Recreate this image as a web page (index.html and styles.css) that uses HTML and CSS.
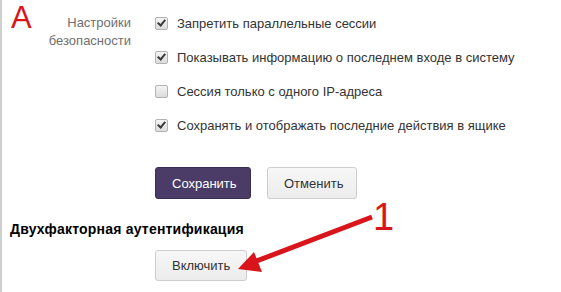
FILE: index.html
```html
<!DOCTYPE html>
<html lang="ru">
  <head>
    <meta charset="UTF-8" />
    <meta name="viewport" content="width=device-width, initial-scale=1.0" />
    <title>Настройки безопасности</title>
    <link rel="stylesheet" href="styles.css">
  </head>
  <body>
    <div class="page">
      <span class="mark mark-a">A</span>

      <div class="section">
        <div class="section-label">Настройки<br />безопасности</div>
        <div class="options">
          <div class="option"><span class="check on"></span>Запретить параллельные сессии</div>
          <div class="option"><span class="check on"></span>Показывать информацию о последнем входе в систему</div>
          <div class="option"><span class="check"></span>Сессия только с одного IP-адреса</div>
          <div class="option"><span class="check on"></span>Сохранять и отображать последние действия в ящике</div>

          <div class="actions">
            <button class="btn btn-primary">Сохранить</button>
            <button class="btn btn-cancel">Отменить</button>
          </div>
        </div>
      </div>

      <h2 class="title">Двухфакторная аутентификация</h2>
      <div class="enable">
        <button class="btn btn-enable">Включить</button>
      </div>

      <!-- annotation arrow -->
      <svg class="arrow" width="561" height="292" viewBox="0 0 561 292">
        <line x1="372" y1="217" x2="254" y2="262" stroke="#d9151b" stroke-width="5" />
        <polygon points="238,269 254,252 262,272" fill="#d9151b" />
      </svg>
      <span class="mark mark-1">1</span>
    </div>
  </body>
</html>
```

FILE: styles.css
```css
body {
  margin: 0;
  font-family: "Liberation Sans", Arial, sans-serif;
  font-size: 13px;
  color: #333;
  background: #fff;
}

.page {
  position: relative;
  height: 292px;
  border-left: 2px solid #cfcfcf;
  overflow: hidden;
}

.mark {
  position: absolute;
  color: #d9151b;
  font-family: "Liberation Sans", Arial, sans-serif;
  line-height: 1;
}

.mark-a {
  left: 9px;
  top: 2px;
  font-size: 31px;
}

.mark-1 {
  left: 371px;
  top: 198px;
  font-size: 38px;
}

.arrow {
  position: absolute;
  left: -2px;
  top: 0;
}

.section {
  display: grid;
  grid-template-columns: 129px 1fr;
  column-gap: 24px;
  padding-top: 6px;
}

.section-label {
  text-align: right;
  color: #6f6f6f;
  line-height: 18px;
  padding-top: 8px;
}

.option {
  display: flex;
  align-items: center;
  height: 34px;
  white-space: nowrap;
}

.check {
  width: 11px;
  height: 11px;
  margin-right: 9px;
  border: 1px solid #b3b3b3;
  border-radius: 2px;
  background: linear-gradient(#f4f4f4, #dcdcdc);
  position: relative;
}

.check.on::after {
  content: "";
  position: absolute;
  left: 3px;
  top: 0px;
  width: 3px;
  height: 6px;
  border-right: 2px solid #3a3a3a;
  border-bottom: 2px solid #3a3a3a;
  transform: rotate(40deg);
}

.actions {
  display: flex;
  gap: 16px;
  margin-top: 25px;
}

.btn {
  font-family: "Liberation Sans", Arial, sans-serif;
  font-size: 13px;
  height: 32px;
  padding: 0 16px;
  border: 1px solid #cdcdcd;
  border-radius: 3px;
  background: linear-gradient(#f7f7f7, #ececec);
  color: #333;
}

.btn-primary {
  width: 96px;
  background: #4a3c66;
  border-color: #3a2e52;
  color: #fff;
}

.btn-cancel {
  width: 90px;
}

.title {
  margin: 22px 0 0 8px;
  font-size: 14px;
  font-weight: bold;
  letter-spacing: 0.2px;
  color: #000;
  line-height: 16px;
}

.enable {
  padding: 13px 0 0 153px;
}

.btn-enable {
  width: 92px;
  height: 31px;
}
```
